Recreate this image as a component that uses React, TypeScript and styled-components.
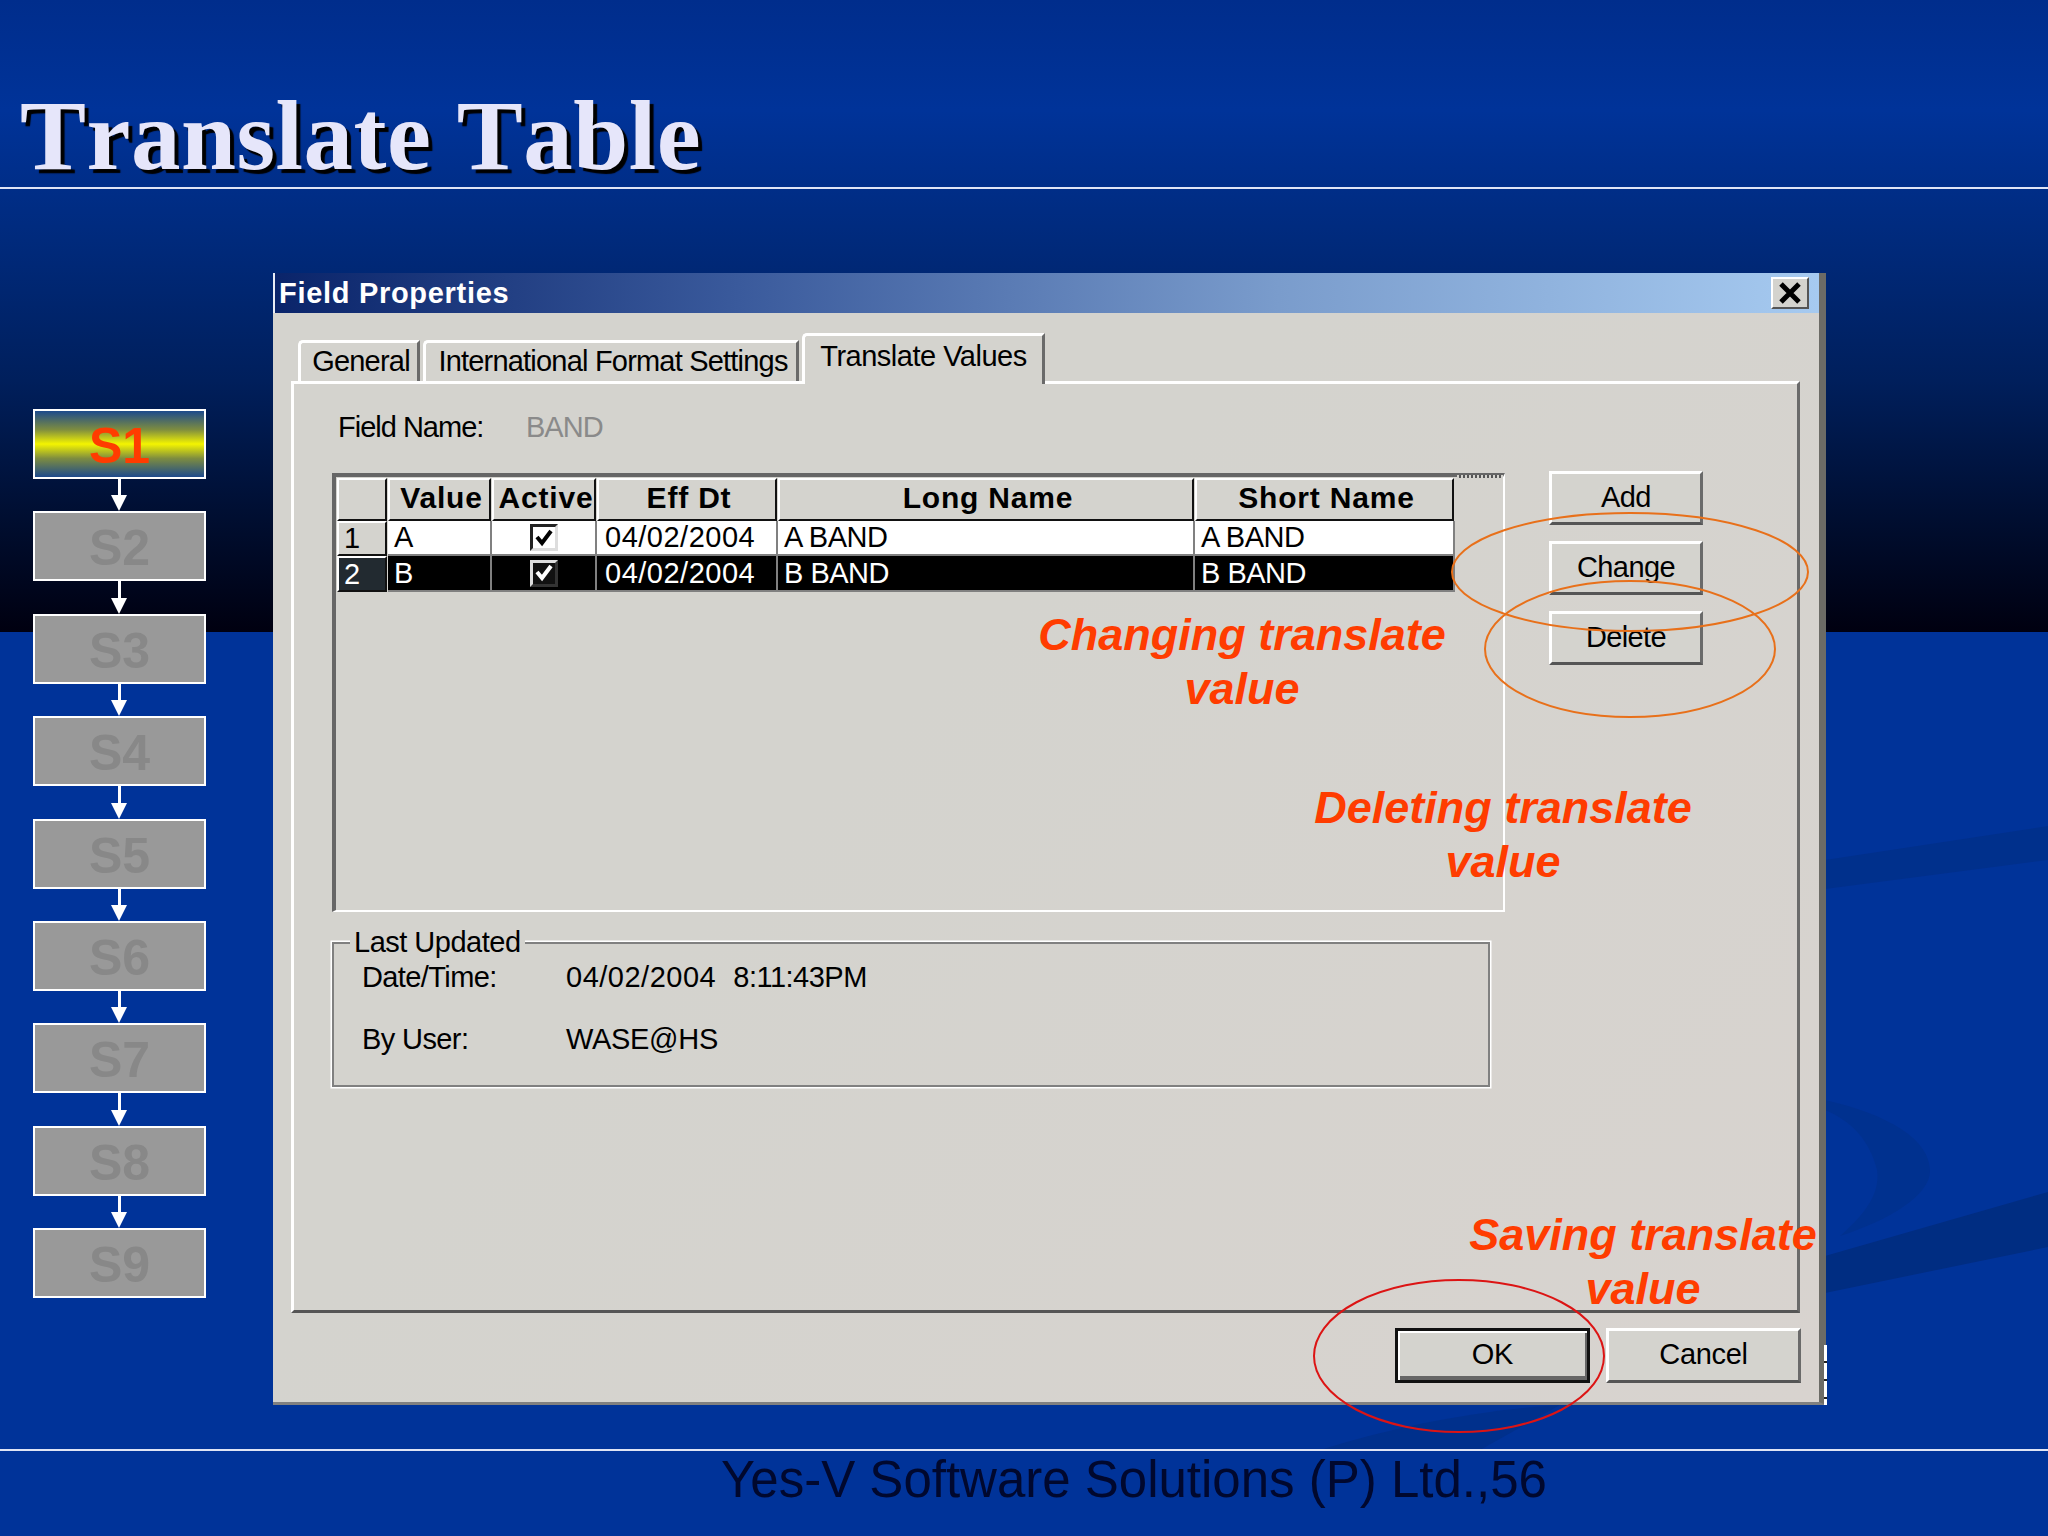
import React from 'react'
import styled, { createGlobalStyle } from 'styled-components'

const GlobalStyle = createGlobalStyle`
    html, body {
        margin: 0;
        padding: 0;
        background: #003399;
    }
    * {
        box-sizing: border-box;
    }
`

const steps = ['S1', 'S2', 'S3', 'S4', 'S5', 'S6', 'S7', 'S8', 'S9']
const columns = ['', 'Value', 'Active', 'Eff Dt', 'Long Name', 'Short Name']
const rows = [
    { id: '1', value: 'A', date: '04/02/2004', long: 'A BAND', short: 'A BAND', selected: false },
    { id: '2', value: 'B', date: '04/02/2004', long: 'B BAND', short: 'B BAND', selected: true },
]

const App = () => {
    return (
        <Slide>
            <GlobalStyle />
            <Backdrop viewBox="0 0 2048 1536">
                <path d="M1825 860 L2048 826 L2048 860 L1825 889 Z" fill="#00308c" />
                <path d="M1825 1100 C1890 1115 1930 1140 1930 1171 C1930 1195 1890 1220 1840 1236 C1870 1210 1880 1190 1877 1170 C1870 1140 1850 1120 1825 1110 Z" fill="#00318f" />
                <path d="M1825 1256 L2048 1192 L2048 1247 L1825 1293 Z" fill="#002d82" />
                <path d="M1320 1450 C1400 1425 1480 1410 1560 1405 L1480 1450 Z" fill="#00308c" />
            </Backdrop>
            <Header>
                <Title>Translate Table</Title>
            </Header>
            <Body>
                <Steps>
                    {steps.map((step, i) => (
                        <React.Fragment key={step}>
                            <StepBox $active={i === 0}>{step}</StepBox>
                            {i < steps.length - 1 && <Arrow />}
                        </React.Fragment>
                    ))}
                </Steps>
                <Dialog>
                    <TitleBar>
                        <TitleText>Field Properties</TitleText>
                        <CloseButton>
                            <svg width="24" height="22" viewBox="0 0 24 22">
                                <path d="M3 2 L21 20 M21 2 L3 20" stroke="#000" strokeWidth="5" fill="none" />
                            </svg>
                        </CloseButton>
                    </TitleBar>
                    <TabStrip>
                        <Tab $width={122}>General</Tab>
                        <Tab $width={376}>International Format Settings</Tab>
                        <Tab $width={243} $active>Translate Values</Tab>
                    </TabStrip>
                    <Panel>
                        <FieldRow>
                            <FieldLabel>Field Name:</FieldLabel>
                            <FieldValue>BAND</FieldValue>
                        </FieldRow>
                        <GridRow>
                            <GridFrame>
                                <GridDots />
                                <Table>
                                    {columns.map((col) => (
                                        <HeadCell key={col || 'corner'}>{col}</HeadCell>
                                    ))}
                                    {rows.map((row) => (
                                        <React.Fragment key={row.id}>
                                            <RowHead $selected={row.selected}>{row.id}</RowHead>
                                            <Cell $selected={row.selected}>{row.value}</Cell>
                                            <CheckCell $selected={row.selected}>
                                                <CheckBox $selected={row.selected}>
                                                    <svg width="20" height="20" viewBox="0 0 20 20">
                                                        <path d="M3 9 L8 15 L17 3" stroke={row.selected ? '#fff' : '#000'} strokeWidth="4" fill="none" />
                                                    </svg>
                                                </CheckBox>
                                            </CheckCell>
                                            <DateCell $selected={row.selected}>{row.date}</DateCell>
                                            <Cell $selected={row.selected}>{row.long}</Cell>
                                            <Cell $selected={row.selected}>{row.short}</Cell>
                                        </React.Fragment>
                                    ))}
                                </Table>
                            </GridFrame>
                            <SideButtons>
                                <SideButton>Add</SideButton>
                                <SideButton>Change</SideButton>
                                <SideButton>Delete</SideButton>
                            </SideButtons>
                        </GridRow>
                        <GroupBox>
                            <GroupLegend>Last Updated</GroupLegend>
                            <InfoLabel>Date/Time:</InfoLabel>
                            <InfoValue $spacing={0.5}>
                                04/02/2004&nbsp; <InfoValue $spacing={-0.5}>8:11:43PM</InfoValue>
                            </InfoValue>
                            <InfoLabel>By User:</InfoLabel>
                            <InfoValue $spacing={-0.3}>WASE@HS</InfoValue>
                        </GroupBox>
                    </Panel>
                    <DialogFooter>
                        <FooterButton $default>OK</FooterButton>
                        <FooterButton>Cancel</FooterButton>
                    </DialogFooter>
                    <Note $x={1242} $y={608}>Changing translate<br />value</Note>
                    <Note $x={1503} $y={781}>Deleting translate<br />value</Note>
                    <Note $x={1643} $y={1208}>Saving translate<br />value</Note>
                </Dialog>
            </Body>
            <Footer>Yes-V Software Solutions (P) Ltd.,56</Footer>
            <Marks viewBox="0 0 2048 1536">
                <ellipse cx="1630" cy="572" rx="178" ry="59" stroke="#e8701a" />
                <ellipse cx="1630" cy="649" rx="145" ry="68" stroke="#e8701a" />
                <ellipse cx="1459" cy="1356" rx="145" ry="76" stroke="#dc1414" />
            </Marks>
        </Slide>
    )
}

export default App

const ui = `"Liberation Sans", Arial, sans-serif`
const face = '#d4d3ce'

const Slide = styled.div`
    position: relative;
    display: flex;
    flex-direction: column;
    width: 2048px;
    height: 1536px;
    overflow: hidden;
    background:
        linear-gradient(180deg, #002d8c 0, #003399 110px, #002a7c 240px, #001f5c 380px, #000f33 510px, #000010 632px, #003399 632px);
    font-family: ${ui};
`
const Backdrop = styled.svg`
    position: absolute;
    inset: 0;
    width: 2048px;
    height: 1536px;
`
const Marks = styled.svg`
    position: absolute;
    inset: 0;
    width: 2048px;
    height: 1536px;
    pointer-events: none;
    & ellipse {
        fill: none;
        stroke-width: 2;
    }
`
const Header = styled.div`
    position: relative;
    display: flex;
    align-items: flex-end;
    height: 189px;
    padding: 0 0 2px 20px;
    border-bottom: 2px solid #dfe4f5;
`
const Title = styled.h1`
    margin: 0;
    font-family: "Liberation Serif", "Times New Roman", serif;
    font-size: 99px;
    line-height: 1;
    font-weight: 700;
    font-kerning: none;
    letter-spacing: 0.5px;
    color: #e6e6fa;
    text-shadow: 4px 4px 1px #000;
`
const Body = styled.div`
    position: relative;
    display: flex;
    align-items: flex-start;
    height: 1260px;
`
const Steps = styled.div`
    display: flex;
    flex-direction: column;
    align-items: center;
    width: 173px;
    margin: 220px 0 0 33px;
`
const StepBox = styled.div<{ $active?: boolean }>`
    display: flex;
    align-items: center;
    justify-content: center;
    width: 173px;
    height: 70px;
    padding-top: 4px;
    border: 2px solid #fff;
    font-size: 50px;
    font-weight: 700;
    color: ${(p) => (p.$active ? '#ff3c00' : '#888')};
    background: ${(p) =>
        p.$active
            ? 'linear-gradient(180deg, #1d4a8c 0%, #7d8c40 28%, #f4f400 50%, #7d8c40 72%, #1d4a8c 100%)'
            : '#999'};
`
const Arrow = styled.div`
    position: relative;
    width: 17px;
    height: 32.4px;
    &::before {
        content: '';
        position: absolute;
        left: 7px;
        top: 0;
        width: 3px;
        height: 17px;
        background: #fff;
    }
    &::after {
        content: '';
        position: absolute;
        left: 0;
        bottom: 0;
        border-left: 8.5px solid transparent;
        border-right: 8.5px solid transparent;
        border-top: 16px solid #fff;
    }
`
const Dialog = styled.div`
    position: relative;
    display: flex;
    flex-direction: column;
    width: 1553px;
    height: 1132px;
    margin: 84px 0 0 67px;
    background: linear-gradient(135deg, ${face} 40%, #d8d3cf 100%);
    border-right: 7px solid #6c6b66;
    border-bottom: 3px solid #808080;
    font-size: 29px;
    color: #000;
    &::after {
        content: '';
        position: absolute;
        right: -8px;
        bottom: -3px;
        width: 3px;
        height: 60px;
        background: repeating-linear-gradient(180deg, #fff 0 16px, #222 16px 18px);
    }
`
const TitleBar = styled.div`
    display: flex;
    align-items: center;
    justify-content: space-between;
    flex: none;
    height: 40px;
    padding: 0 10px 0 4px;
    border-left: 2px solid #e8ecf5;
    background: linear-gradient(90deg, #0a246a 0%, #3a5a9c 30%, #7a9ccc 65%, #a6caf0 100%);
`
const TitleText = styled.div`
    font-size: 29px;
    font-weight: 700;
    letter-spacing: 0.7px;
    color: #fff;
`
const CloseButton = styled.div`
    display: flex;
    align-items: center;
    justify-content: center;
    width: 38px;
    height: 32px;
    background: ${face};
    border: 2px solid;
    border-color: #fff #555 #555 #fff;
`
const TabStrip = styled.div`
    display: flex;
    align-items: flex-end;
    gap: 3px;
    flex: none;
    height: 68px;
    padding-left: 25px;
`
const Tab = styled.div<{ $width: number; $active?: boolean }>`
    position: relative;
    z-index: ${(p) => (p.$active ? 1 : 0)};
    display: flex;
    align-items: center;
    justify-content: center;
    width: ${(p) => p.$width}px;
    height: ${(p) => (p.$active ? 51 : 41)}px;
    margin-bottom: ${(p) => (p.$active ? -3 : 0)}px;
    padding: ${(p) => (p.$active ? '0 0 8px 0' : '0 0 2px 4px')};
    background: ${face};
    border-top: 3px solid #fff;
    border-left: 3px solid #fff;
    border-right: 3px solid #6a6a6a;
    border-top-left-radius: 5px;
    letter-spacing: ${(p) => (p.$active ? -0.5 : -0.8)}px;
    white-space: nowrap;
`
const Panel = styled.div`
    flex: none;
    width: 1509px;
    height: 932px;
    margin-left: 18px;
    padding: 26px 0 0 38px;
    border: 3px solid;
    border-color: #fff #6a6a6a #555 #fff;
`
const FieldRow = styled.div`
    display: flex;
    align-items: center;
    height: 34px;
    padding-left: 6px;
    letter-spacing: -1px;
`
const FieldLabel = styled.span`
    width: 188px;
`
const FieldValue = styled.span`
    color: #8a8a8a;
`
const GridRow = styled.div`
    display: flex;
    align-items: flex-start;
    margin-top: 29px;
`
const GridFrame = styled.div`
    position: relative;
    flex: none;
    width: 1173px;
    height: 439px;
    padding: 1px 0 0 1px;
    border-top: 4px solid #666;
    border-left: 4px solid #666;
    border-right: 2px solid #fff;
    border-bottom: 2px solid #fff;
`
const GridDots = styled.div`
    position: absolute;
    top: -2px;
    right: 0;
    width: 46px;
    height: 3px;
    background: repeating-linear-gradient(90deg, ${face} 0 2px, #555 2px 4px);
`
const Table = styled.div`
    display: grid;
    grid-template-columns: 51px 104px 105px 181px 417px 260px;
    grid-template-rows: 43px 35px 36px;
`
const HeadCell = styled.div`
    display: flex;
    align-items: center;
    justify-content: center;
    padding: 0 0 4px 4px;
    background: ${face};
    border: 2px solid;
    border-color: #fff #111 #111 #fff;
    margin-right: 1px;
    font-size: 30px;
    font-weight: 700;
    letter-spacing: 0.8px;
    white-space: nowrap;
    overflow: hidden;
`
const RowHead = styled.div<{ $selected?: boolean }>`
    display: flex;
    align-items: center;
    padding-left: 5px;
    margin-right: 1px;
    background: ${(p) => (p.$selected ? '#222a30' : face)};
    color: ${(p) => (p.$selected ? '#fff' : '#000')};
    border: 2px solid;
    border-color: #fff #111 #111 #fff;
`
const Cell = styled.div<{ $selected?: boolean }>`
    display: flex;
    align-items: center;
    padding-left: 6px;
    background: ${(p) => (p.$selected ? '#000' : '#fff')};
    color: ${(p) => (p.$selected ? '#fff' : '#000')};
    border-right: 2px solid #808080;
    border-bottom: 2px solid #808080;
    letter-spacing: -0.5px;
    white-space: nowrap;
`
const DateCell = styled(Cell)`
    padding-left: 8px;
    letter-spacing: 0.5px;
`
const CheckCell = styled(Cell)`
    justify-content: center;
    padding-left: 0;
`
const CheckBox = styled.div<{ $selected?: boolean }>`
    display: flex;
    align-items: center;
    justify-content: center;
    width: 28px;
    height: 27px;
    background: ${(p) => (p.$selected ? '#111' : '#fff')};
    border: 3px solid;
    border-color: ${(p) => (p.$selected ? '#ddd #333 #333 #ddd' : '#222 #ddd #ddd #222')};
`
const SideButtons = styled.div`
    display: flex;
    flex-direction: column;
    gap: 16px;
    margin: -2px 0 0 44px;
`
const SideButton = styled.div`
    display: flex;
    align-items: center;
    justify-content: center;
    width: 154px;
    height: 54px;
    padding-bottom: 2px;
    background: ${face};
    border: 3px solid;
    border-color: #fff #6a6a6a #555 #fff;
    letter-spacing: -0.6px;
`
const GroupBox = styled.div`
    position: relative;
    display: grid;
    grid-template-columns: 204px 1fr;
    grid-auto-rows: 62px;
    align-items: center;
    width: 1158px;
    height: 145px;
    margin-top: 30px;
    padding: 2px 0 0 28px;
    border: 2px solid #808080;
    box-shadow: 0 0 0 1.5px #fff;
`
const GroupLegend = styled.div`
    position: absolute;
    top: -20px;
    left: 16px;
    padding: 0 4px;
    background: ${face};
    line-height: 36px;
    letter-spacing: -0.5px;
`
const InfoLabel = styled.span`
    letter-spacing: -0.6px;
`
const InfoValue = styled.span<{ $spacing: number }>`
    letter-spacing: ${(p) => p.$spacing}px;
`
const DialogFooter = styled.div`
    display: flex;
    justify-content: flex-end;
    gap: 16px;
    margin-top: 15px;
    padding-right: 18px;
`
const FooterButton = styled.div<{ $default?: boolean }>`
    display: flex;
    align-items: center;
    justify-content: center;
    width: 195px;
    height: 55px;
    padding-bottom: 2px;
    background: ${face};
    border: 3px solid;
    border-color: ${(p) => (p.$default ? '#111' : '#fff #6a6a6a #555 #fff')};
    box-shadow: ${(p) => (p.$default ? 'inset 2px 2px 0 #fff, inset -2px -4px 0 #666' : 'none')};
    letter-spacing: -0.3px;
`
const Note = styled.div<{ $x: number; $y: number }>`
    position: absolute;
    left: ${(p) => p.$x - 273 - 230}px;
    top: ${(p) => p.$y - 273}px;
    width: 460px;
    text-align: center;
    font-size: 45px;
    line-height: 54px;
    font-weight: 700;
    font-style: italic;
    color: #ff3c00;
    white-space: nowrap;
`
const Footer = styled.div`
    position: relative;
    height: 85px;
    border-top: 2px solid #dfe4f5;
    padding-left: 721px;
    font-size: 51px;
    line-height: 58px;
    color: #00082e;
    white-space: nowrap;
`
